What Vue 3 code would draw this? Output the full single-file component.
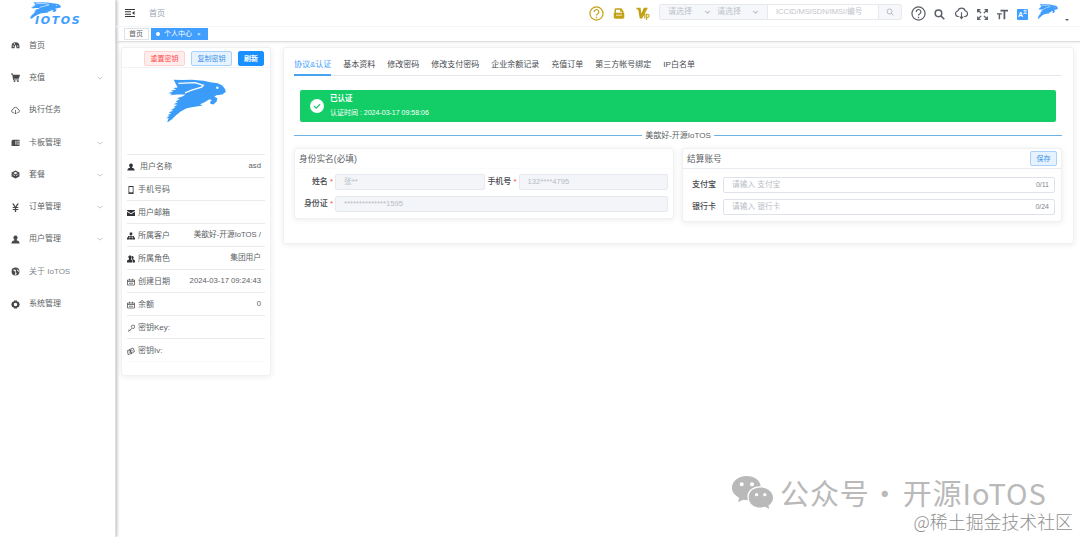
<script setup>
import { ref } from 'vue';

const icons = {
    dashboard: 'M8 2a7 7 0 0 0-7 7v4h5l1-4 1.500-3L9 9l1 4h5V9a7 7 0 0 0-7-7zM3 8h2v2H3zM5 4h2v2H5zM11 8h2v2h-2z',
    cart: 'M0 1h3l1 2h12l-2 7H5l.4 1.500H14V13H4L2.200 2.500H0zM5 13.500h2.500V16H5zM11 13.500h2.500V16H11z',
    card: 'M3 3h12v11H1V5zM8 5v7h1.500V5zM11.500 5v3h2V5zM11.500 9.500V12h2V9.500z',
    box: 'M8 1l7 3.500v7L8 15l-7-3.500v-7zM4 5.500L8 7.500l4-2L8 3.500zM3 7.500v1l4 2v-1zM13 7.500l-4 2v1l4-2z',
    yen: 'M2 1h3l3 5 3-5h3l-4 6h3v2H9.200v1.500H13v2H9.200V16H6.800v-3.500H3v-2h3.800V9H3V7h3z',
    user: 'M8 1a3.800 3.800 0 0 1 2.300 6.800L10 9.500l4 1.500 1.500 4H.5L2 11l4-1.500-.3-1.700A3.800 3.800 0 0 1 8 1z',
    globe: 'M8 1a7 7 0 1 1 0 14A7 7 0 0 1 8 1zM3.500 5L6 7l2 3-1.500 3.500L9 14l1-3-2-3 1-2-2-1.500zM10 3l1 3 3 3 .3-2z',
    gear: 'M5.500 1h5l1 2 2.500.5L15.500 8 14 12.500l-2.500.5-1 2h-5l-1-2-2.500-.5L.5 8 2 3.500 4.500 3zM8 5a3 3 0 1 0 0 6 3 3 0 0 0 0-6z',
    phone: 'M3 0h10v16H3zM4.500 2v10.500h7V2zM7 13.700v1h2v-1z',
    mail: 'M0 2h16v1.500l-8 5-8-5zM0 5.500l8 5 8-5V14H0z',
    tree: 'M5.500 1h5v5H8.700v2H14v3h2v4h-5v-4h1.500V9.500H8.700V11h1.800v4h-5v-4h1.800V9.500H3.500V11H5v4H0v-4h2V8h5.300V6H5.500z',
    peoples: 'M6 1a3 3 0 0 1 2 5.500V9l3 2v4H0v-4l4-2V6.500A3 3 0 0 1 6 1zM10 2c4 0 4 4 2 6l4 3v4h-4v-4.500L9.500 8.500z',
};

const strokeIcons = {
    cloud: 'M5 12H4a3.200 3.200 0 0 1-.3-6.300 4.500 4.500 0 0 1 8.700 0A3.200 3.200 0 0 1 12 12h-1M8 7v7M6 12l2 2.300L10 12',
    calendar: 'M1 4h14v10H1zM5 1.500V5M11 1.500V5M1 7h14M4 10.500h8',
    key: 'M9 7a3.300 3.300 0 1 1 1.500 1.500L7 11l-1 2-2 .2L2 15M4 11l2 2',
    link: 'M5 5l7-3 3 7-6 4zM1 7l6-1 2 7-7 2zM4 9l3 3M8 5l4 4',
};

const menu = [
    { label: '首页', icon: 'dashboard' },
    { label: '充值', icon: 'cart', children: true },
    { label: '执行任务', icon: 'cloud' },
    { label: '卡板管理', icon: 'card', children: true },
    { label: '套餐', icon: 'box', children: true },
    { label: '订单管理', icon: 'yen', children: true },
    { label: '用户管理', icon: 'user', children: true },
    { label: '关于 IoTOS', icon: 'globe', light: true },
    { label: '系统管理', icon: 'gear' },
];

const profile = [
    { label: '用户名称', icon: 'user', value: 'asd', wide: true },
    { label: '手机号码', icon: 'phone', value: '' },
    { label: '用户邮箱', icon: 'mail', value: '' },
    { label: '所属客户', icon: 'tree', value: '美歆好-开源IoTOS /' },
    { label: '所属角色', icon: 'peoples', value: '集团用户' },
    { label: '创建日期', icon: 'calendar', value: '2024-03-17 09:24:43' },
    { label: '余额', icon: 'calendar', value: '0' },
    { label: '密钥Key:', icon: 'key', value: '' },
    { label: '密钥Iv:', icon: 'link', value: '' },
];

const tabs = ['协议&认证', '基本资料', '修改密码', '修改支付密码', '企业余额记录', '充值订单', '第三方帐号绑定', 'IP白名单'];
const activeTab = ref(tabs[0]);
</script>

<template>
    <div class="app">
        <svg class="defs" width="0" height="0">
            <symbol id="hare" viewBox="0 0 183 128" preserveAspectRatio="none">
                <path d="M26 2l26 1 28-1 36 3 20 5 22 3 14 6 9 12 1 8-10 7-18 2-6 5 9 4-2 10-10 9-9-2v-8l5-3-8-3-14 9-14 6 8 4-28 4-20 4-18 10-14 11-12 12-15 10 5-14-7 1 10-8-7-1 12-6-8-2 14-6-7-2 13-7-5-2 11-6-11-2 12-6-6-3 12-6-8-3 16-5 10-6-26 0-22 2 8-3-12-3 15-4-8-3 17-4-10-4 14-2z" />
                <path class="slit" d="M40 13l50-2 25 8-5 5-30 9-20 8" />
                <circle class="cut" cx="157" cy="26" r="3.500" />
            </symbol>
        </svg>

        <aside class="sidebar">
            <div class="logo">
                <svg class="logo-hare"><use href="#hare" /></svg>
                <span>IOTOS</span>
            </div>
            <ul class="menu">
                <li v-for="item in menu" :key="item.label" :class="{ light: item.light }">
                    <svg class="icon" viewBox="0 0 16 16">
                        <path v-if="icons[item.icon]" :d="icons[item.icon]" fill-rule="evenodd" />
                        <path v-else class="line" :d="strokeIcons[item.icon]" />
                    </svg>
                    <span>{{ item.label }}</span>
                    <svg v-if="item.children" class="arrow" viewBox="0 0 8 5"><path class="line" d="M1 1l3 3 3-3" /></svg>
                </li>
            </ul>
        </aside>

        <div class="main">
            <header class="navbar">
                <svg class="fold" viewBox="0 0 20 16">
                    <path d="M0 0h20v2H0zM0 4.700h12v2H0zM0 9.400h12v2H0zM0 14h20v2H0zM19 4v8l-5-4z" />
                </svg>
                <span class="crumb">首页</span>
                <div class="gold">
                    <svg viewBox="0 0 16 16">
                        <circle class="line" cx="8" cy="8" r="7" />
                        <path class="line" d="M5.500 6.300a2.500 2.500 0 1 1 3.600 2.200Q8 9 8 10.200M8 11.500V13" />
                    </svg>
                    <svg viewBox="0 0 16 16" class="file">
                        <path fill-rule="evenodd" d="M3 1h8l3 4v2h1v7l-2 1H3l-2-1V7h1V3zM4 3v4h8V5.500H9.500V3zM4 9.500v1.300h8V9.500z" />
                    </svg>
                    <svg viewBox="0 0 16 16" class="vip">
                        <path d="M0 1h5l1 7 3-7h5L7 14H4L2 3H0zM9.500 8H11v6H9.500z" />
                        <path class="line" d="M12.500 16V9h1a1.500 1.500 0 0 1 0 4h-1" />
                    </svg>
                </div>
                <div class="search">
                    <div class="select">请选择<svg viewBox="0 0 8 5"><path class="line" d="M1 1l3 3 3-3" /></svg></div>
                    <div class="select second">请选择<svg viewBox="0 0 8 5"><path class="line" d="M1 1l3 3 3-3" /></svg></div>
                    <div class="keyword">ICCID/MSISDN/IMSI/编号</div>
                    <div class="search-btn">
                        <svg viewBox="0 0 16 16"><path class="line" d="M7 2a5 5 0 1 1 0 10A5 5 0 0 1 7 2zM11 11l4 4" /></svg>
                    </div>
                </div>
                <div class="tools">
                    <svg viewBox="0 0 16 16" class="help">
                        <circle class="line" cx="8" cy="8" r="7" />
                        <path class="line" d="M5.500 6.300a2.500 2.500 0 1 1 3.600 2.200Q8 9 8 10.200M8 11.500V13" />
                    </svg>
                    <svg viewBox="0 0 16 16" class="find"><path class="line" d="M6.500 1.500a4.800 4.800 0 1 1 0 9.600 4.800 4.800 0 0 1 0-9.600zM10 10l5 5" /></svg>
                    <svg viewBox="0 0 16 16" class="down"><path class="line" :d="strokeIcons.cloud" /></svg>
                    <svg viewBox="0 0 16 16" class="full">
                        <path class="line" d="M1 5V1h4M1 1l5 5M11 1h4v4M15 1l-5 5M1 11v4h4M1 15l5-5M15 11v4h-4M15 15l-5-5" />
                    </svg>
                    <svg viewBox="0 0 16 16" class="size"><path d="M5 1h11v2.500h-4V15H9.500V3.500H5zM0 6h7v2H4.500v7h-2V8H0z" /></svg>
                    <span class="lang">A<sup>文</sup></span>
                    <svg class="avatar"><use href="#hare" /></svg>
                    <i class="caret"></i>
                </div>
            </header>

            <nav class="tags">
                <span class="tag">首页</span>
                <span class="tag active"><i></i>个人中心<b>×</b></span>
            </nav>

            <div class="content">
                <section class="card profile">
                    <div class="profile-head">
                        <button class="btn danger">重置密钥</button>
                        <button class="btn plain">复制密钥</button>
                        <button class="btn primary">刷新</button>
                    </div>
                    <div class="portrait"><svg><use href="#hare" /></svg></div>
                    <ul class="info">
                        <li v-for="row in profile" :key="row.label" :class="{ wide: row.wide }">
                            <svg class="icon" viewBox="0 0 16 16">
                                <path v-if="icons[row.icon]" :d="icons[row.icon]" fill-rule="evenodd" />
                                <path v-else class="line" :d="strokeIcons[row.icon]" />
                            </svg>
                            <span>{{ row.label }}</span>
                            <em>{{ row.value }}</em>
                        </li>
                    </ul>
                </section>

                <section class="card detail">
                    <div class="tabs">
                        <span
                            v-for="tab in tabs"
                            :key="tab"
                            :class="{ active: tab === activeTab }"
                            @click="activeTab = tab"
                        >{{ tab }}</span>
                    </div>

                    <div class="alert">
                        <svg viewBox="0 0 16 16">
                            <circle cx="8" cy="8" r="8" />
                            <path class="line" d="M4.500 8l2.500 2.500 4.500-4.500" />
                        </svg>
                        <div>
                            <strong>已认证</strong>
                            <p>认证时间 : 2024-03-17 09:58:06</p>
                        </div>
                    </div>

                    <div class="divider"><span>美歆好-开源IoTOS</span></div>

                    <div class="panels">
                        <div class="card panel">
                            <h3>身份实名(必填)</h3>
                            <div class="identity">
                                <div class="field">
                                    <label>姓名<i>*</i></label>
                                    <div class="input disabled">张**</div>
                                    <label class="mobile">手机号<i>*</i></label>
                                    <div class="input disabled">132****4795</div>
                                </div>
                                <div class="field">
                                    <label>身份证<i>*</i></label>
                                    <div class="input disabled">**************1595</div>
                                </div>
                            </div>
                        </div>
                        <div class="card panel account">
                            <h3>结算账号<button class="btn plain save">保存</button></h3>
                            <div class="accounts">
                                <div class="field">
                                    <label>支付宝</label>
                                    <div class="input">请输入 支付宝<small>0/11</small></div>
                                </div>
                                <div class="field">
                                    <label>银行卡</label>
                                    <div class="input">请输入 银行卡<small>0/24</small></div>
                                </div>
                            </div>
                        </div>
                    </div>
                </section>
            </div>
        </div>

        <div class="wechat">
            <svg viewBox="0 0 40 32">
                <path
                    fill-rule="evenodd"
                    d="M14 0c8 0 13.500 4.500 14 10-7-.5-13 4-13 10l.4 3.500-4.400-.5-5 2.500 1-4.500C2.500 18.500 0 15.500 0 11.500 0 5 6 0 14 0zM9.500 6a2 2 0 1 0 0 4 2 2 0 0 0 0-4zM19.500 6a2 2 0 1 0 0 4 2 2 0 0 0 0-4z"
                />
                <path
                    fill-rule="evenodd"
                    d="M28 11.200c7 0 12 4.400 12 9.800 0 3.300-1.800 6-4.500 7.800l.8 3.200-4-2c-9 2.500-16-2.500-16-9s5-9.800 11.700-9.800zM24 16.500a1.600 1.600 0 1 0 0 3.200 1.600 1.600 0 0 0 0-3.200zM32 16.500a1.600 1.600 0 1 0 0 3.200 1.600 1.600 0 0 0 0-3.200z"
                />
            </svg>
            <span>公众号</span><b>·</b><span>开源IoTOS</span>
        </div>
        <div class="community">@稀土掘金技术社区</div>
    </div>
</template>

<style>
body {
    margin: 0;
    background: #ffffff;
}
</style>

<style scoped>
* {
    box-sizing: border-box;
}

.app {
    position: relative;
    display: flex;
    width: 1080px;
    height: 537px;
    overflow: hidden;
    background: #ffffff;
    color: #5c5f64;
    font-family: "Liberation Sans", "Noto Sans CJK SC", sans-serif;
    font-size: 8px;
    line-height: 12px;
}

.defs {
    position: absolute;
}

svg {
    display: block;
    flex: none;
    fill: currentColor;
}

.line {
    fill: none;
    stroke: currentColor;
    stroke-width: 1.3;
}

.cut {
    fill: #ffffff;
}

.slit {
    fill: none;
    stroke: #ffffff;
    stroke-width: 4;
}

ul {
    margin: 0;
    padding: 0;
    list-style: none;
}

i,
em {
    font-style: normal;
}

.sidebar {
    width: 116px;
    flex: none;
    border-right: 1px solid #dedfe0;
    box-shadow: 1px 0 3px rgba(0, 0, 0, 0.28);
}

.logo {
    display: flex;
    flex-direction: column;
    height: 29.5px;
    padding: 2px 0 0 29px;
    color: #409eff;
}

.logo-hare {
    width: 32px;
    height: 17px;
}

.logo span {
    margin: -4px 0 0 6px;
    font-family: "DejaVu Sans", sans-serif;
    font-size: 11px;
    font-style: italic;
    font-weight: bold;
    line-height: 12px;
    letter-spacing: 1.6px;
}

.menu li {
    display: flex;
    align-items: center;
    height: 32.3px;
    padding: 0 12px 0 11px;
}

.menu .icon {
    width: 9px;
    height: 9px;
    margin-right: 9px;
    color: #48494c;
}

.menu .light span {
    color: #85888d;
}

.arrow {
    width: 6px;
    height: 4px;
    margin-left: auto;
    color: #c0c3c8;
}

.main {
    flex: 1;
    min-width: 0;
}

.navbar {
    display: flex;
    align-items: center;
    height: 27px;
    padding: 0 11px 0 9px;
    border-bottom: 1px solid #f5f6f7;
}

.fold {
    width: 10px;
    height: 8px;
    color: #333538;
}

.crumb {
    width: 16px;
    flex: none;
    margin: 1px 0 0 14px;
    color: #97a3b4;
    white-space: nowrap;
}

.gold {
    display: flex;
    align-items: center;
    margin-left: auto;
    color: #c2a216;
}

.gold svg {
    width: 15px;
    height: 15px;
}

.gold .file {
    width: 12px;
    height: 13px;
    margin-left: 9px;
}

.gold .vip {
    width: 14px;
    height: 13px;
    margin-left: 11px;
}

.search {
    display: flex;
    height: 16px;
    margin: -3px 0 0 9px;
    border: 1px solid #e7e9ee;
    border-radius: 2px;
    background: #f5f7fa;
    color: #bfc3ca;
    line-height: 14px;
}

.select {
    display: flex;
    align-items: center;
    width: 52px;
    padding-left: 8px;
}

.select.second {
    width: 55px;
    padding-left: 5px;
}

.select svg {
    width: 7px;
    height: 4px;
    margin-left: 12px;
}

.second svg {
    margin-left: 11px;
}

.keyword {
    width: 112px;
    padding-left: 8px;
    border: solid #e7e9ee;
    border-width: 0 1px;
    background: #ffffff;
    font-size: 7.5px;
    white-space: nowrap;
}

.search-btn {
    display: grid;
    place-items: center;
    width: 22px;
}

.search-btn svg {
    width: 8px;
    height: 8px;
    color: #989ca4;
}

.tools {
    display: flex;
    align-items: center;
    margin-left: 9px;
    color: #5a5e66;
}

.tools .help {
    width: 15px;
    height: 15px;
}

.tools .find {
    width: 11px;
    height: 11px;
    margin: 2px 0 0 8px;
}

.find .line {
    stroke-width: 2.2;
}

.tools .down {
    width: 15px;
    height: 14px;
    margin-left: 9px;
}

.tools .full {
    width: 11px;
    height: 11px;
    margin: 2px 0 0 8px;
}

.full .line {
    stroke-width: 1.8;
}

.tools .size {
    width: 11px;
    height: 11px;
    margin: 2px 0 0 9px;
}

.lang {
    width: 11px;
    height: 11px;
    margin: 2px 0 0 9px;
    border-radius: 1px;
    background: #409eff;
    color: #ffffff;
    font-size: 7px;
    font-weight: bold;
    line-height: 11px;
    text-align: center;
    white-space: nowrap;
}

.lang sup {
    font-size: 4px;
    line-height: 0;
}

.tools .avatar {
    width: 21px;
    height: 15px;
    margin: -4px 0 0 9px;
    color: #409eff;
}

.caret {
    margin: 13px 0 0 7px;
    border: 2px solid transparent;
    border-top-color: #5a5e66;
    border-bottom: 0;
}

.tags {
    display: flex;
    gap: 2px;
    height: 15px;
    padding: 1px 0 0 8px;
    border-bottom: 1px solid #dcdfe0;
    box-shadow: 0 1px 2px rgba(0, 0, 0, 0.07);
}

.tag {
    width: 25px;
    height: 12px;
    padding: 0 4px;
    border: 1px solid #dfe2e8;
    font-size: 7px;
    line-height: 10px;
    white-space: nowrap;
}

.tag.active {
    display: flex;
    align-items: center;
    width: 57px;
    border-color: #409eff;
    background: #409eff;
    color: #ffffff;
}

.tag i {
    width: 4px;
    height: 4px;
    flex: none;
    margin-right: 4px;
    border-radius: 50%;
    background: #ffffff;
}

.tag b {
    margin-left: 5px;
    font-size: 6px;
    font-weight: normal;
}

.content {
    display: flex;
    align-items: flex-start;
    gap: 12px;
    padding: 5px 6px 0 5px;
}

.card {
    border: 1px solid #eff1f3;
    border-radius: 3px;
    background: #ffffff;
    box-shadow: 0 1px 6px rgba(0, 0, 0, 0.08);
}

.profile {
    width: 150px;
    height: 329px;
    flex: none;
}

.profile-head {
    display: flex;
    align-items: center;
    justify-content: flex-end;
    gap: 6px;
    height: 20px;
    padding: 2px 6px 0 0;
    border-bottom: 1px solid #f0f2f5;
}

.btn {
    width: 41px;
    height: 15px;
    padding: 0;
    border: 1px solid;
    border-radius: 2px;
    font-family: inherit;
    font-size: 7px;
    line-height: 12px;
    text-align: center;
    white-space: nowrap;
}

.btn.danger {
    border-color: #ffd2d2;
    background: #ffeded;
    color: #ff4949;
}

.btn.plain {
    border-color: #a8d2fa;
    background: #e6f2ff;
    color: #4093e8;
}

.btn.primary {
    width: 26px;
    border-color: #1890ff;
    background: #1890ff;
    color: #ffffff;
    font-weight: bold;
}

.btn.save {
    width: 27px;
}

.portrait {
    height: 86px;
    padding: 11px 0 0 43px;
    color: #3a9cf8;
}

.portrait svg {
    width: 61px;
    height: 43px;
}

.info {
    margin: 0 5px;
    border-top: 1px solid #e9ebee;
}

.info li {
    display: flex;
    align-items: center;
    height: 23.05px;
    padding: 2px 4px 0 0;
    border-bottom: 1px solid #e9ebee;
}

.info li:last-child {
    border-bottom-color: #f8f9fa;
}

.info .icon {
    width: 8px;
    height: 8px;
    margin: 0 3px 0 0;
    color: #303236;
}

.info .wide .icon {
    margin-right: 5px;
}

.info em {
    margin: -2px 0 0 auto;
    font-size: 7.7px;
    white-space: nowrap;
}

.detail {
    flex: 1;
    height: 197px;
    padding: 0 11px 0 10px;
}

.tabs {
    display: flex;
    gap: 12px;
    height: 28px;
    padding-top: 11px;
    border-bottom: 1px solid #e4e7ed;
    color: #484b50;
}

.tabs span {
    height: 17px;
    white-space: nowrap;
}

.tabs .active {
    border-bottom: 2px solid #4aa3ee;
    color: #409eff;
}

.alert {
    display: flex;
    align-items: center;
    gap: 6px;
    height: 32px;
    margin: 14px 6px 0;
    padding-left: 10px;
    border-radius: 2px;
    background: #13ce66;
    color: #ffffff;
}

.alert svg {
    width: 14px;
    height: 14px;
}

.alert .line {
    stroke: #13ce66;
}

.alert strong {
    display: block;
    font-size: 7.5px;
}

.alert p {
    margin: 2px 0 0;
    font-size: 7px;
}

.divider {
    display: flex;
    align-items: center;
    gap: 3px;
    height: 13px;
    margin: 7px 0 6px;
}

.divider::before,
.divider::after {
    flex: 1;
    height: 1px;
    background: #6fb3e6;
    content: '';
}

.panels {
    display: flex;
    align-items: flex-start;
    gap: 8px;
}

.panel {
    flex: 1;
    height: 71px;
}

.account {
    height: 74px;
}

.panel h3 {
    display: flex;
    align-items: center;
    justify-content: space-between;
    height: 20px;
    margin: 0;
    padding: 0 4px;
    border-bottom: 1px solid #f9fafb;
    font-size: 8.7px;
    font-weight: normal;
}

.account h3 {
    border-bottom-color: #e9ebf0;
}

.identity {
    display: grid;
    gap: 6px;
    padding: 5px 5px 0 0;
}

.accounts {
    display: grid;
    gap: 6px;
    padding: 8px 6px 0 0;
}

.field {
    display: flex;
    align-items: center;
}

.field label {
    width: 40px;
    flex: none;
    padding-right: 2px;
    color: #45484d;
    font-weight: 500;
    text-align: right;
    white-space: nowrap;
}

.accounts label {
    padding-right: 7px;
}

.field .mobile {
    width: 34px;
}

.field label i {
    margin-left: 2px;
    color: #ff4949;
}

.input {
    display: flex;
    flex: 1;
    height: 16px;
    padding: 0 5px 0 8px;
    border: 1px solid #dfe3e9;
    border-radius: 2px;
    color: #b8bcc4;
    font-size: 7.7px;
    line-height: 14px;
}

.input.disabled {
    border-color: #e6e9ef;
    background: #f3f5f8;
}

.input small {
    margin-left: auto;
    color: #83868c;
    font-size: 7px;
}

.wechat {
    position: absolute;
    top: 476px;
    left: 732px;
    display: flex;
    align-items: center;
    height: 33px;
    color: #b9b9b9;
    font-family: "Noto Sans CJK SC", sans-serif;
    font-size: 29px;
    font-weight: 400;
    line-height: 33px;
    letter-spacing: 0.9px;
}

.wechat svg {
    width: 41px;
    height: 33px;
    margin-right: 7px;
}

.wechat b {
    width: 31px;
    margin-right: 2px;
    font-weight: 400;
    text-align: center;
}

.community {
    position: absolute;
    top: 512px;
    right: 7px;
    color: #909090;
    font-family: "Noto Sans CJK SC", sans-serif;
    font-size: 17.9px;
    font-weight: 300;
    line-height: 19px;
    white-space: nowrap;
}
</style>
